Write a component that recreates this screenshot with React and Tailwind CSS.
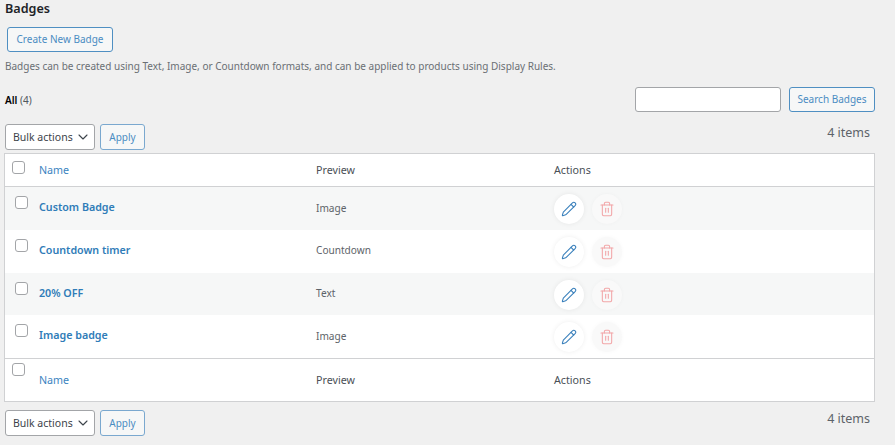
import React from "react";
import { Pencil, Trash2, ChevronDown } from "lucide-react";

function Check() {
  return <span className="block w-[11px] h-[11px] rounded-[3px] border border-[#a3a5a8] bg-white box-content" />;
}

function HeadRow({ top }) {
  const pad = top ? "pt-[8px]" : "pt-[13px]";
  return (
    <div className={`flex bg-white border-[#d0d1d3] text-[10.7px] ${top ? "border-b h-[33px]" : "border-t h-[43px]"}`}>
      <div className={`w-[34px] shrink-0 pl-[7px] ${top ? "pt-[7px]" : "pt-[4px]"}`}><Check /></div>
      <div className={`w-[277px] shrink-0 text-[#3a84bf] ${pad}`}>Name</div>
      <div className={`w-[238px] shrink-0 text-[#4a5056] ${pad}`}>Preview</div>
      <div className={`text-[#4a5056] ${pad}`}>Actions</div>
    </div>
  );
}

function Row({ name, preview, striped }) {
  return (
    <div className={`flex h-[42.75px] ${striped ? "bg-[#f6f7f7]" : "bg-white"}`}>
      <div className="w-[34px] shrink-0 pl-[10px] pt-[9px]"><Check /></div>
      <div className="w-[277px] shrink-0 pt-[12px] font-semibold text-[10.7px] text-[#2f7cb8]">{name}</div>
      <div className="w-[238px] shrink-0 pt-[12.5px] text-[#5d6369] text-[10.1px]">{preview}</div>
      <div className="flex gap-[8px] pt-[7px]">
        <span className="w-[30px] h-[30px] rounded-full bg-white shadow-[0_0_5px_rgba(0,0,0,0.07)] flex items-center justify-center text-[#3a80bc]">
          <Pencil size={16} strokeWidth={1.6} />
        </span>
        <span className="w-[30px] h-[30px] rounded-full bg-[#f9f9f9] shadow-[0_0_4px_rgba(0,0,0,0.03)] flex items-center justify-center text-[#f2a6a8]">
          <Trash2 size={16} strokeWidth={1.6} />
        </span>
      </div>
    </div>
  );
}

function Bulk() {
  return (
    <div className="flex gap-[5px]">
      <div className="w-[90px] h-[26px] rounded-[3px] border border-[#a3a5a8] bg-white flex items-center justify-between pl-[7px] pr-[3px] text-[10.5px] text-[#3c434a] whitespace-nowrap">
        <span>Bulk actions</span>
        <ChevronDown size={16} strokeWidth={1.6} />
      </div>
      <div className="w-[45px] h-[26px] rounded-[3px] border border-[#7aa8cf] bg-[#f6f7f7] flex items-center justify-center text-[#4a8cc2]">Apply</div>
    </div>
  );
}

export default function App() {
  return (
    <div className="w-[895px] h-[445px] overflow-hidden bg-[#f0f0f0] font-['Noto_Sans',sans-serif] text-[10px] leading-[17px] text-[#3c434a]">
      <div className="pl-[5px] pr-[20px]">
        <h1 className="text-[12.6px] font-semibold leading-[17px] text-[#1d2327]">Badges</h1>
        <div className="pl-[2px] pt-[10px]">
          <div className="w-[106px] h-[25px] rounded-[3px] border border-[#4f8fc2] bg-[#f6f7f7] flex items-center justify-center text-[#4a8cc2]">Create New Badge</div>
        </div>
        <p className="pt-[5.5px] text-[#6a6f74]">Badges can be created using Text, Image, or Countdown formats, and can be applied to products using Display Rules.</p>
        <div className="flex justify-between items-start pt-[12.5px]">
          <div className="pt-[5px]"><span className="font-semibold text-black">All</span> <span className="text-[#50575e]">(4)</span></div>
          <div className="flex gap-[8px]">
            <div className="w-[146px] h-[25px] rounded-[3px] border border-[#a3a5a8] bg-white" />
            <div className="w-[86px] h-[25px] rounded-[3px] border border-[#4f8fc2] bg-[#f6f7f7] flex items-center justify-center text-[#4a8cc2]">Search Badges</div>
          </div>
        </div>
        <div className="flex justify-between pt-[12px]">
          <Bulk />
          <span className="pr-[5px] text-[12.5px] text-[#5d6369]">4 items</span>
        </div>
        <div className="mt-[3px] -ml-[1px] w-[871px] border border-[#d0d1d3] bg-white">
          <HeadRow top />
          <Row name="Custom Badge" preview="Image" striped />
          <Row name="Countdown timer" preview="Countdown" />
          <Row name="20% OFF" preview="Text" striped />
          <Row name="Image badge" preview="Image" />
          <HeadRow />
        </div>
        <div className="flex justify-between pt-[8px]">
          <Bulk />
          <span className="pr-[5px] text-[12.5px] text-[#5d6369]">4 items</span>
        </div>
      </div>
    </div>
  );
}
